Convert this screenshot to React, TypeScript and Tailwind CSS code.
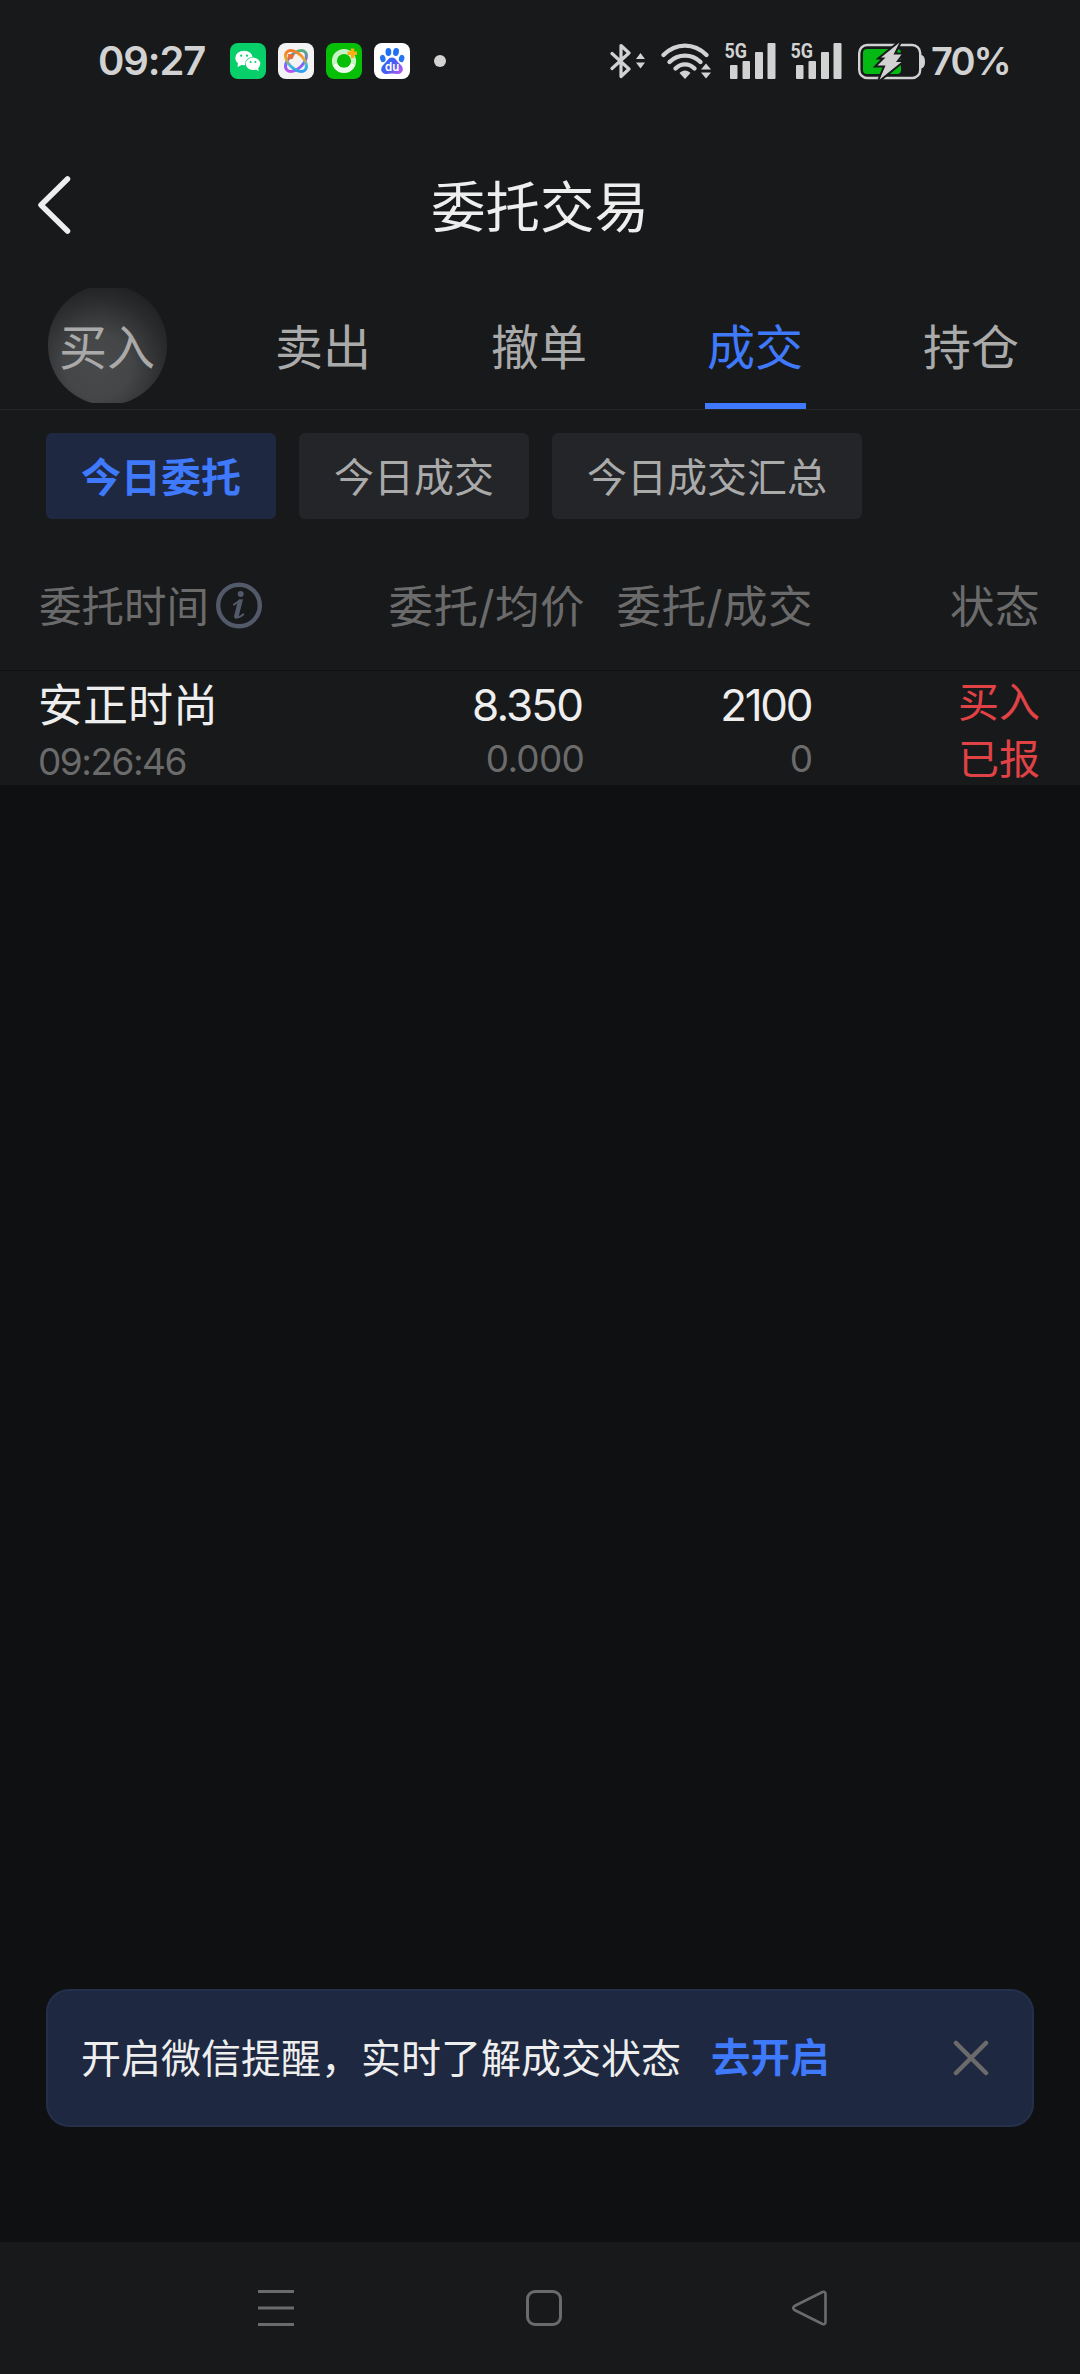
import React, { useState } from 'react';

const tabs = ['买入', '卖出', '撤单', '成交', '持仓'];
const filters = ['今日委托', '今日成交', '今日成交汇总'];

const orders = [
  {
    id: 1,
    name: '安正时尚',
    time: '09:26:46',
    price: '8.350',
    avgPrice: '0.000',
    amount: '2100',
    filled: '0',
    side: '买入',
    status: '已报',
  },
];

function WechatIcon() {
  return (
    <svg width="36" height="36" viewBox="0 0 36 36">
      <rect width="36" height="36" rx="8" fill="#07cf69" />
      <ellipse cx="14" cy="15" rx="8.7" ry="7.3" fill="#fff" />
      <path d="M8 19.5 L7.6 24 L12.5 21.5 Z" fill="#fff" />
      <ellipse cx="23" cy="20.8" rx="8" ry="6.9" fill="#07cf69" />
      <ellipse cx="23" cy="20.8" rx="7.3" ry="6.2" fill="#fff" />
      <path d="M25 26 L28.6 28 L28.2 24.5 Z" fill="#fff" />
      <circle cx="11.2" cy="12.7" r="1.1" fill="#07cf69" />
      <circle cx="17" cy="12.7" r="1.1" fill="#07cf69" />
      <circle cx="20.6" cy="19" r="1" fill="#07cf69" />
      <circle cx="25.4" cy="19" r="1" fill="#07cf69" />
    </svg>
  );
}

function RibbonIcon() {
  return (
    <svg width="36" height="36" viewBox="0 0 36 36" fill="none">
      <defs>
        <linearGradient id="ribbonA" x1="7" y1="28" x2="29" y2="7" gradientUnits="userSpaceOnUse">
          <stop offset="0" stopColor="#d946ef" />
          <stop offset="0.45" stopColor="#6d6cf5" />
          <stop offset="1" stopColor="#4cc94f" />
        </linearGradient>
        <linearGradient id="ribbonB" x1="7" y1="8" x2="29" y2="29" gradientUnits="userSpaceOnUse">
          <stop offset="0" stopColor="#f0662b" />
          <stop offset="0.4" stopColor="#f7a325" />
          <stop offset="0.65" stopColor="#3db8e8" />
          <stop offset="1" stopColor="#1e8af0" />
        </linearGradient>
      </defs>
      <rect width="36" height="36" rx="8" fill="#f3f3f3" />
      <ellipse cx="18" cy="18" rx="12.800" ry="7.400" transform="rotate(-45 18 18)" stroke="url(#ribbonA)" strokeWidth="3" />
      <ellipse cx="18" cy="18" rx="12.800" ry="7.400" transform="rotate(45 18 18)" stroke="url(#ribbonB)" strokeWidth="3" />
      <path d="M10 11 L16.500 11.500 L14.500 16 L10.500 16.500 Z" fill="#ee6a34" />
    </svg>
  );
}

function RingIcon() {
  return (
    <svg width="36" height="36" viewBox="0 0 36 36" fill="none">
      <rect width="36" height="36" rx="8" fill="#06bf06" />
      <circle cx="18" cy="18" r="9.6" stroke="#c8f3c4" strokeWidth="5" />
      <path d="M9 21 A9.600 9.600 0 0 0 27 21" stroke="#eefced" strokeWidth="5" />
      <path d="M26.500 5.500 V15 M21.500 10.200 H31" stroke="#ffae12" strokeWidth="3.400" strokeLinejoin="round" />
    </svg>
  );
}

function BaiduIcon() {
  return (
    <svg width="36" height="36" viewBox="0 0 36 36">
      <defs>
        <linearGradient id="paw" x1="0" y1="0" x2="1" y2="0.6">
          <stop offset="0" stopColor="#2468f2" />
          <stop offset="0.6" stopColor="#4a5df5" />
          <stop offset="1" stopColor="#a45cf2" />
        </linearGradient>
      </defs>
      <rect width="36" height="36" rx="8" fill="#fff" />
      <ellipse cx="8.800" cy="15.500" rx="2.700" ry="3.700" transform="rotate(-14 8.800 15.500)" fill="#2673f3" />
      <ellipse cx="14.400" cy="9" rx="2.900" ry="4" fill="#1f70f3" />
      <ellipse cx="22" cy="9" rx="2.900" ry="4" transform="rotate(10 22 9)" fill="#1f70f3" />
      <ellipse cx="27.600" cy="15.500" rx="2.700" ry="3.700" transform="rotate(14 27.600 15.500)" fill="#2673f3" />
      <path
        d="M18 14.500 C21.500 14.500 22.500 18 25.500 20.500 C29 23.500 30 27 27.500 29.500 C25 32 21.500 30.600 18 30.600 C14.500 30.600 11 32 8.500 29.500 C6 27 7.500 23.500 10.500 20.500 C13.500 18 14.500 14.500 18 14.500 Z"
        fill="url(#paw)"
      />
      <text x="18.200" y="28.200" textAnchor="middle" fontFamily="Inter, sans-serif" fontSize="11.500" fontWeight="600" fill="#fff">
        du
      </text>
    </svg>
  );
}

function BluetoothIcon() {
  return (
    <svg width="36" height="38" viewBox="0 0 36 38" fill="none">
      <path d="M2 11.500 L19 27 L11 34.500 V3.500 L19 11 L2 26.500" stroke="#d2d2d2" strokeWidth="3.200" strokeLinejoin="round" strokeLinecap="round" />
      <path d="M30.500 11 L35 17 H26 Z M26 20.500 H35 L30.500 26.500 Z" fill="#d2d2d2" />
    </svg>
  );
}

function WifiIcon() {
  return (
    <svg width="52" height="38" viewBox="0 0 52 38" fill="none">
      <g stroke="#d2d2d2" strokeWidth="4.400" strokeLinecap="round">
        <path d="M3.500 13 C16 0.500 34 0.500 46.500 13" />
        <path d="M9.500 20 C18 11.500 32 11.500 40.500 20" />
        <path d="M15.500 26.500 C21 21 29 21 34.500 26.500" />
      </g>
      <path d="M19.500 31 C22.500 27.500 27.500 27.500 30.500 31 L25 37 Z" fill="#d2d2d2" />
      <path d="M46 21.500 L51 27.500 H41 Z M41 30.500 H51 L46 36.500 Z" fill="#d2d2d2" />
    </svg>
  );
}

function SignalIcon() {
  return (
    <svg width="53" height="46" viewBox="0 -4 53 46" fill="#d2d2d2">
      <text x="0.500" y="15.800" fontFamily="Roboto, sans-serif" fontSize="21" fontWeight="700" textLength="22.500" lengthAdjust="spacingAndGlyphs">
        5G
      </text>
      <rect x="6" y="23" width="7.500" height="14" rx="1" />
      <rect x="18.500" y="19" width="7.500" height="18" rx="1" />
      <rect x="31" y="10" width="8" height="27" rx="1" />
      <rect x="43.500" y="1" width="8" height="36" rx="1" />
    </svg>
  );
}

function BatteryIcon() {
  return (
    <svg width="68" height="40" viewBox="0 0 68 40" fill="none">
      <rect x="1.200" y="4" width="61" height="33" rx="8" stroke="#d2d2d2" strokeWidth="2.400" />
      <path d="M63.500 14.500 C67.500 14.500 67.500 27 63.500 27 Z" fill="#d2d2d2" stroke="#d2d2d2" />
      <rect x="5" y="8" width="38" height="25" rx="4" fill="#04b914" />
      <path
        d="M41.500 1.500 L23 16.500 H27.500 L19.500 24.500 H27.500 L21.500 38.800 L43.500 21 H38 L43.500 13.500 H35.500 Z"
        fill="#d2d2d2"
        stroke="#18191b"
        strokeWidth="4"
        paintOrder="stroke"
      />
    </svg>
  );
}

function StatusBar() {
  return (
    <div className="h-[122px] shrink-0 pl-[98px] pr-[71px] flex items-center justify-between text-[#d2d2d2] font-semibold">
      <div className="flex items-center">
        <span className="w-[132px] text-[40px] leading-none tracking-[-1.1px]">09:27</span>
        <div className="flex items-center gap-3">
          <WechatIcon />
          <RibbonIcon />
          <RingIcon />
          <BaiduIcon />
        </div>
        <span className="ml-6 w-3 h-3 rounded-full bg-[#d2d2d2]" />
      </div>
      <div className="flex items-center">
        <BluetoothIcon />
        <span className="ml-[14px]"><WifiIcon /></span>
        <span className="ml-3"><SignalIcon /></span>
        <span className="ml-[13px]"><SignalIcon /></span>
        <span className="ml-[15px]"><BatteryIcon /></span>
        <span className="ml-[5px] w-[78px] text-[38px] leading-none tracking-[-1.9px] whitespace-nowrap">70%</span>
      </div>
    </div>
  );
}

function InfoIcon() {
  return (
    <svg width="46" height="47" viewBox="0 0 46 47" fill="none">
      <circle cx="23" cy="23.500" r="20.800" stroke="#525969" strokeWidth="4.400" />
      <circle cx="24.700" cy="12" r="3" fill="#525969" />
      <path d="M18 22.500 C20.500 20.500 23 19 25.500 18.500 L21.500 33 C20.800 36.500 24.500 35 27.200 32.500" stroke="#525969" strokeWidth="2.200" strokeLinecap="round" />
      <path d="M24 19.500 L20.300 34.500" stroke="#525969" strokeWidth="4.500" strokeLinecap="round" />
    </svg>
  );
}

export default function App() {
  const [activeTab, setActiveTab] = useState('成交');
  const [activeFilter, setActiveFilter] = useState('今日委托');
  const [showBanner, setShowBanner] = useState(true);

  return (
    <div className="w-[1080px] h-[2374px] bg-[#0f1012] flex flex-col overflow-hidden font-[Inter,'Noto_Sans_CJK_SC',sans-serif]">
      <div className="bg-[#18191b] flex flex-col">
        <StatusBar />

        {/* Title bar */}
        <div className="h-[166px] px-[36px] grid grid-cols-[1fr_auto_1fr] items-center">
          <button className="justify-self-start">
            <svg width="36" height="60" viewBox="0 0 36 60" fill="none">
              <path d="M31.500 4 L5 30 L31.500 56" stroke="#eeeeee" strokeWidth="5.500" strokeLinecap="round" strokeLinejoin="round" />
            </svg>
          </button>
          <h1 className="pt-[5px] text-[54.5px] leading-none text-[#eeeeee]">委托交易</h1>
          <span />
        </div>

        {/* Tabs */}
        <div className="h-[122px] grid grid-cols-5 border-b border-[#242528]">
          {tabs.map(tab => (
            <button
              key={tab}
              onClick={() => setActiveTab(tab)}
              className="relative pr-[2px] flex flex-col items-center overflow-hidden"
            >
              {tab === '买入' && (
                <span className="absolute -top-[3px] left-[48px] w-[119px] h-[120px] rounded-full bg-[radial-gradient(circle_at_42%_68%,#48494a_0%,#454647_30%,#2b2c2e_62%,#18191b_92%)] [clip-path:inset(3px_0_2px_0)]" />
              )}
              <span className={`relative h-[115px] pt-1 flex items-center text-[48px] leading-none ${activeTab === tab ? 'text-[#3f79fc]' : 'text-[#aaaaaa]'}`}>
                {tab}
              </span>
              {activeTab === tab && <span className="w-[101px] h-[6px] bg-[#3f79fc]" />}
            </button>
          ))}
        </div>

        {/* Filters */}
        <div className="pt-[23px] px-[46px] flex gap-[23px]">
          {filters.map(f => (
            <button
              key={f}
              onClick={() => setActiveFilter(f)}
              className={`h-[86px] pt-1 px-[35px] rounded-[6px] text-[40px] leading-none ${
                activeFilter === f ? 'bg-[#1e2840] text-[#3f79fc] font-bold' : 'bg-[#242528] text-[#aaaaaa]'
              }`}
            >
              {f}
            </button>
          ))}
        </div>

        {/* Orders */}
        <div className="h-[152px] pt-[13px] px-10 grid grid-cols-[317px_228px_228px_227px] border-b border-[#0f1012] text-[44.5px] tracking-[0.5px] leading-none text-[#6b6b6b]">
          <div className="-ml-px h-[150px] flex items-center gap-[7px]">
            <span className="pt-px text-[42.5px] tracking-normal">委托时间</span>
            <span className="-mt-[3px]"><InfoIcon /></span>
          </div>
          <div className="h-[150px] flex items-center justify-end">委托/均价</div>
          <div className="h-[150px] flex items-center justify-end">委托/成交</div>
          <div className="h-[150px] flex items-center justify-end">状态</div>
        </div>
        {orders.map(o => (
          <div key={o.id} className="h-[114px] px-10 grid grid-cols-[317px_228px_228px_227px] leading-none">
            <div className="-ml-[2px] pt-3">
              <p className="text-[45px] text-[#eeeeee]">{o.name}</p>
              <p className="mt-[15px] text-[37px] tracking-[-1.5px] text-[#6b6b6b]">{o.time}</p>
            </div>
            <div className="pt-3 text-right">
              <p className="pr-[3px] text-[44px] tracking-[-1.9px] text-[#eeeeee]">{o.price}</p>
              <p className="mt-[13px] pr-px text-[37px] tracking-[-0.8px] text-[#6b6b6b]">{o.avgPrice}</p>
            </div>
            <div className="pt-3 text-right">
              <p className="pr-[2px] text-[44px] tracking-[-2.4px] text-[#eeeeee]">{o.amount}</p>
              <p className="mt-[13px] pr-px text-[37px] tracking-[-1px] text-[#6b6b6b]">{o.filled}</p>
            </div>
            <div className="pt-[11px] text-right text-[41px] text-[#e04245]">
              <p>{o.side}</p>
              <p className="mt-4">{o.status}</p>
            </div>
          </div>
        ))}
      </div>

      <div className="flex-1" />

      {showBanner && (
        <div className="mx-[46px] mb-[115px] h-[138px] pl-[33px] pr-[43px] flex items-center rounded-[23px] border-2 border-[#242f4a] bg-[#1e2840] text-[40px] leading-none text-[#eeeeee]">
          <span className="pt-px">开启微信提醒，实时了解成交状态</span>
          <a className="ml-[30px] pt-px text-[39.5px] font-bold text-[#3f79fc]">去开启</a>
          <button className="ml-auto" onClick={() => setShowBanner(false)}>
            <svg width="36" height="36" viewBox="0 0 36 36" fill="none">
              <path d="M3 3 L33 33 M33 3 L3 33" stroke="#6b6b6b" strokeWidth="4.500" strokeLinecap="round" />
            </svg>
          </button>
        </div>
      )}

      {/* System navigation */}
      <div className="h-[132px] pl-[258px] pr-[252px] flex items-center justify-between bg-[#18191b]">
        <svg width="36" height="36" viewBox="0 0 36 36" fill="#6b6b6b">
          <rect y="0" width="36" height="3" />
          <rect y="16.500" width="36" height="3" />
          <rect y="33" width="36" height="3" />
        </svg>
        <svg className="ml-[2px]" width="36" height="36" viewBox="0 0 36 36" fill="none">
          <rect x="1.500" y="1.500" width="33" height="33" rx="7.500" stroke="#6b6b6b" strokeWidth="3" />
        </svg>
        <svg width="36" height="36" viewBox="0 0 36 36" fill="none">
          <path d="M2.500 16 L30.500 2 Q33.500 1 33.500 4 V32 Q33.500 35 30.500 34 L2.500 20 Q0 18 2.500 16 Z" stroke="#6b6b6b" strokeWidth="2.600" strokeLinejoin="round" />
        </svg>
      </div>
    </div>
  );
}
